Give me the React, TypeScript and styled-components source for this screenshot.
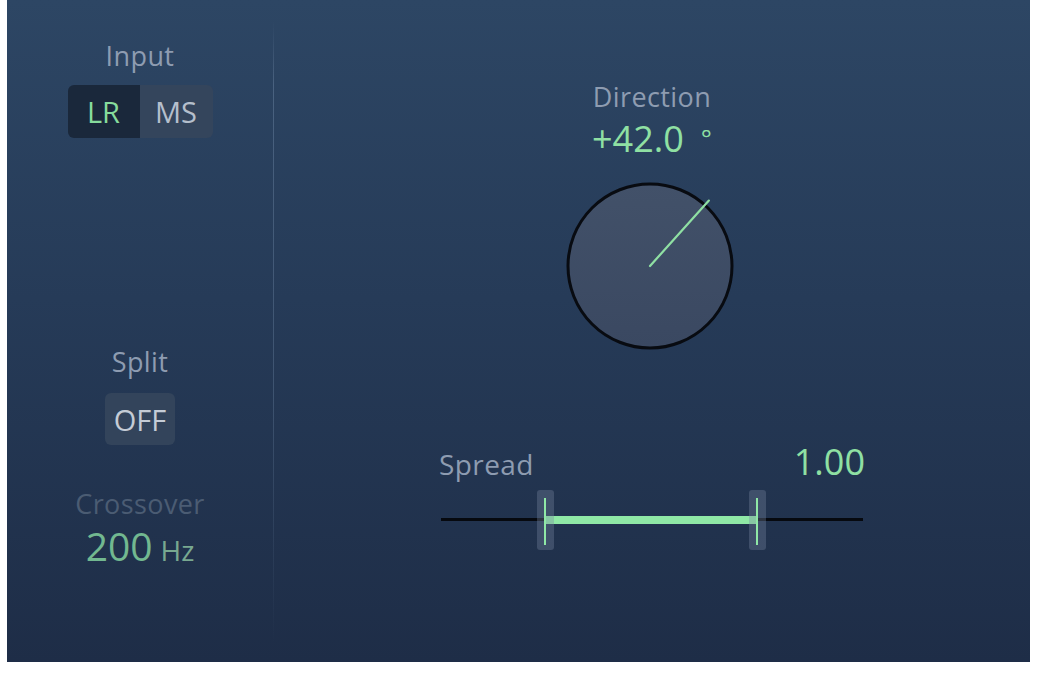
import React from 'react';
import styled, { createGlobalStyle } from 'styled-components';

const GlobalStyle = createGlobalStyle`
  html, body {
    margin: 0;
    padding: 0;
    background: #ffffff;
  }
  body {
    font-family: 'Open Sans', 'Liberation Sans', sans-serif;
  }
`;

const Page = styled.div`
  width: 1045px;
  height: 676px;
  padding-left: 7px;
  box-sizing: border-box;
`;

const Panel = styled.div`
  width: 1023px;
  height: 662px;
  display: flex;
  background: linear-gradient(180deg, #2d4664 0%, #263b58 45%, #1e2d47 100%);
  overflow: hidden;
`;

const LeftColumn = styled.div`
  width: 266px;
  display: flex;
  flex-direction: column;
  align-items: center;
  padding-top: 40px;
  box-sizing: border-box;
`;

const Divider = styled.div`
  width: 1px;
  margin: 22px 0 18px;
  background: linear-gradient(
    180deg,
    rgba(110, 135, 165, 0) 0%,
    rgba(110, 135, 165, 0.45) 10%,
    rgba(110, 135, 165, 0.35) 60%,
    rgba(110, 135, 165, 0) 100%
  );
`;

const RightArea = styled.div`
  flex: 1;
  display: flex;
  flex-direction: column;
  align-items: center;
  padding-top: 81px;
`;

const Label = styled.div<{ $dim?: boolean; $gap?: number }>`
  font-size: 27px;
  line-height: 32px;
  letter-spacing: 0.4px;
  color: ${(p) => (p.$dim ? '#4b5c73' : '#8e9cb1')};
  margin-top: ${(p) => p.$gap ?? 0}px;
`;

const Segmented = styled.div`
  display: flex;
  margin-top: 13px;
  border-radius: 6px;
  overflow: hidden;
`;

const SegButton = styled.div<{ $active?: boolean }>`
  width: ${(p) => (p.$active ? 72 : 73)}px;
  height: 53px;
  display: flex;
  align-items: center;
  justify-content: center;
  font-size: 29px;
  background: ${(p) => (p.$active ? '#1a283b' : '#34455c')};
  color: ${(p) => (p.$active ? '#86dc9c' : '#b5bfcc')};
`;

const ToggleButton = styled.div`
  margin-top: 15px;
  width: 70px;
  height: 52px;
  border-radius: 6px;
  background: #33445b;
  color: #c5ccd6;
  font-size: 29px;
  display: flex;
  align-items: center;
  justify-content: center;
`;

const FreqValue = styled.div`
  margin-top: 6px;
  line-height: 40px;
  color: #72b890;
  font-size: 39px;
  display: flex;
  align-items: baseline;
  gap: 8px;
`;

const FreqUnit = styled.span`
  font-size: 28px;
  color: #78a890;
`;

const Value = styled.div`
  margin-top: 6px;
  font-size: 36px;
  line-height: 40px;
  color: #8fe0a3;
  display: flex;
  align-items: baseline;
`;

const Degree = styled.span`
  margin-left: 17px;
  font-size: 26px;
  position: relative;
  top: -4px;
`;

const KnobWrap = styled.svg`
  margin-top: 19px;
  margin-right: 4px;
  display: block;
`;

const SliderBlock = styled.div`
  width: 424px;
  margin-top: 91px;
  margin-left: 2px;
`;

const SliderHead = styled.div`
  display: flex;
  justify-content: space-between;
  align-items: baseline;
`;

const SliderValue = styled.div`
  font-size: 36px;
  line-height: 40px;
  color: #8fe0a3;
`;

const SliderLabel = styled(Label)`
  line-height: 40px;
  font-size: 28px;
  margin-left: -2px;
`;

const Track = styled.div`
  position: relative;
  margin-top: 6px;
  height: 60px;
`;

const TrackLine = styled.div`
  position: absolute;
  left: 0;
  right: 2px;
  top: 28px;
  height: 3px;
  background: #06090f;
`;

const RangeBar = styled.div`
  position: absolute;
  top: 26px;
  height: 8px;
  background: #8fe8a6;
`;

const Handle = styled.div`
  position: absolute;
  top: 0;
  width: 17px;
  height: 60px;
  margin-left: -8px;
  border-radius: 3px;
  background: rgba(120, 135, 160, 0.35);
  &::after {
    content: '';
    position: absolute;
    left: 7px;
    top: 8px;
    width: 2px;
    height: 47px;
    background: #8fe8a6;
  }
`;

const Knob: React.FC<{ angle: number }> = ({ angle }) => {
  const c = 85;
  const len = 88;
  const rad = (angle * Math.PI) / 180;
  const x2 = c + len * Math.sin(rad);
  const y2 = c - len * Math.cos(rad);
  return (
    <KnobWrap width="170" height="170" viewBox="0 0 170 170">
      <defs>
        <linearGradient id="knobFill" x1="0" y1="0" x2="0" y2="1">
          <stop offset="0%" stopColor="#425169" />
          <stop offset="100%" stopColor="#3a4861" />
        </linearGradient>
      </defs>
      <circle cx={c} cy={c} r="82" fill="url(#knobFill)" stroke="#080b11" strokeWidth="3" />
      <line x1={c} y1={c} x2={x2} y2={y2} stroke="#8fe0a3" strokeWidth="2.2" strokeLinecap="round" />
    </KnobWrap>
  );
};

const App: React.FC = () => {
  const spreadLeft = 104;
  const spreadRight = 316;

  return (
    <Page>
      <GlobalStyle />
      <Panel>
        <LeftColumn>
          <Label>Input</Label>
          <Segmented>
            <SegButton $active>LR</SegButton>
            <SegButton>MS</SegButton>
          </Segmented>

          <Label $gap={208}>Split</Label>
          <ToggleButton>OFF</ToggleButton>

          <Label $dim $gap={43}>Crossover</Label>
          <FreqValue>
            200<FreqUnit>Hz</FreqUnit>
          </FreqValue>
        </LeftColumn>

        <Divider />

        <RightArea>
          <Label>Direction</Label>
          <Value>
            +42.0<Degree>°</Degree>
          </Value>
          <Knob angle={42} />

          <SliderBlock>
            <SliderHead>
              <SliderLabel>Spread</SliderLabel>
              <SliderValue>1.00</SliderValue>
            </SliderHead>
            <Track>
              <TrackLine />
              <RangeBar style={{ left: spreadLeft, width: spreadRight - spreadLeft }} />
              <Handle style={{ left: spreadLeft }} />
              <Handle style={{ left: spreadRight }} />
            </Track>
          </SliderBlock>
        </RightArea>
      </Panel>
    </Page>
  );
};

export default App;
